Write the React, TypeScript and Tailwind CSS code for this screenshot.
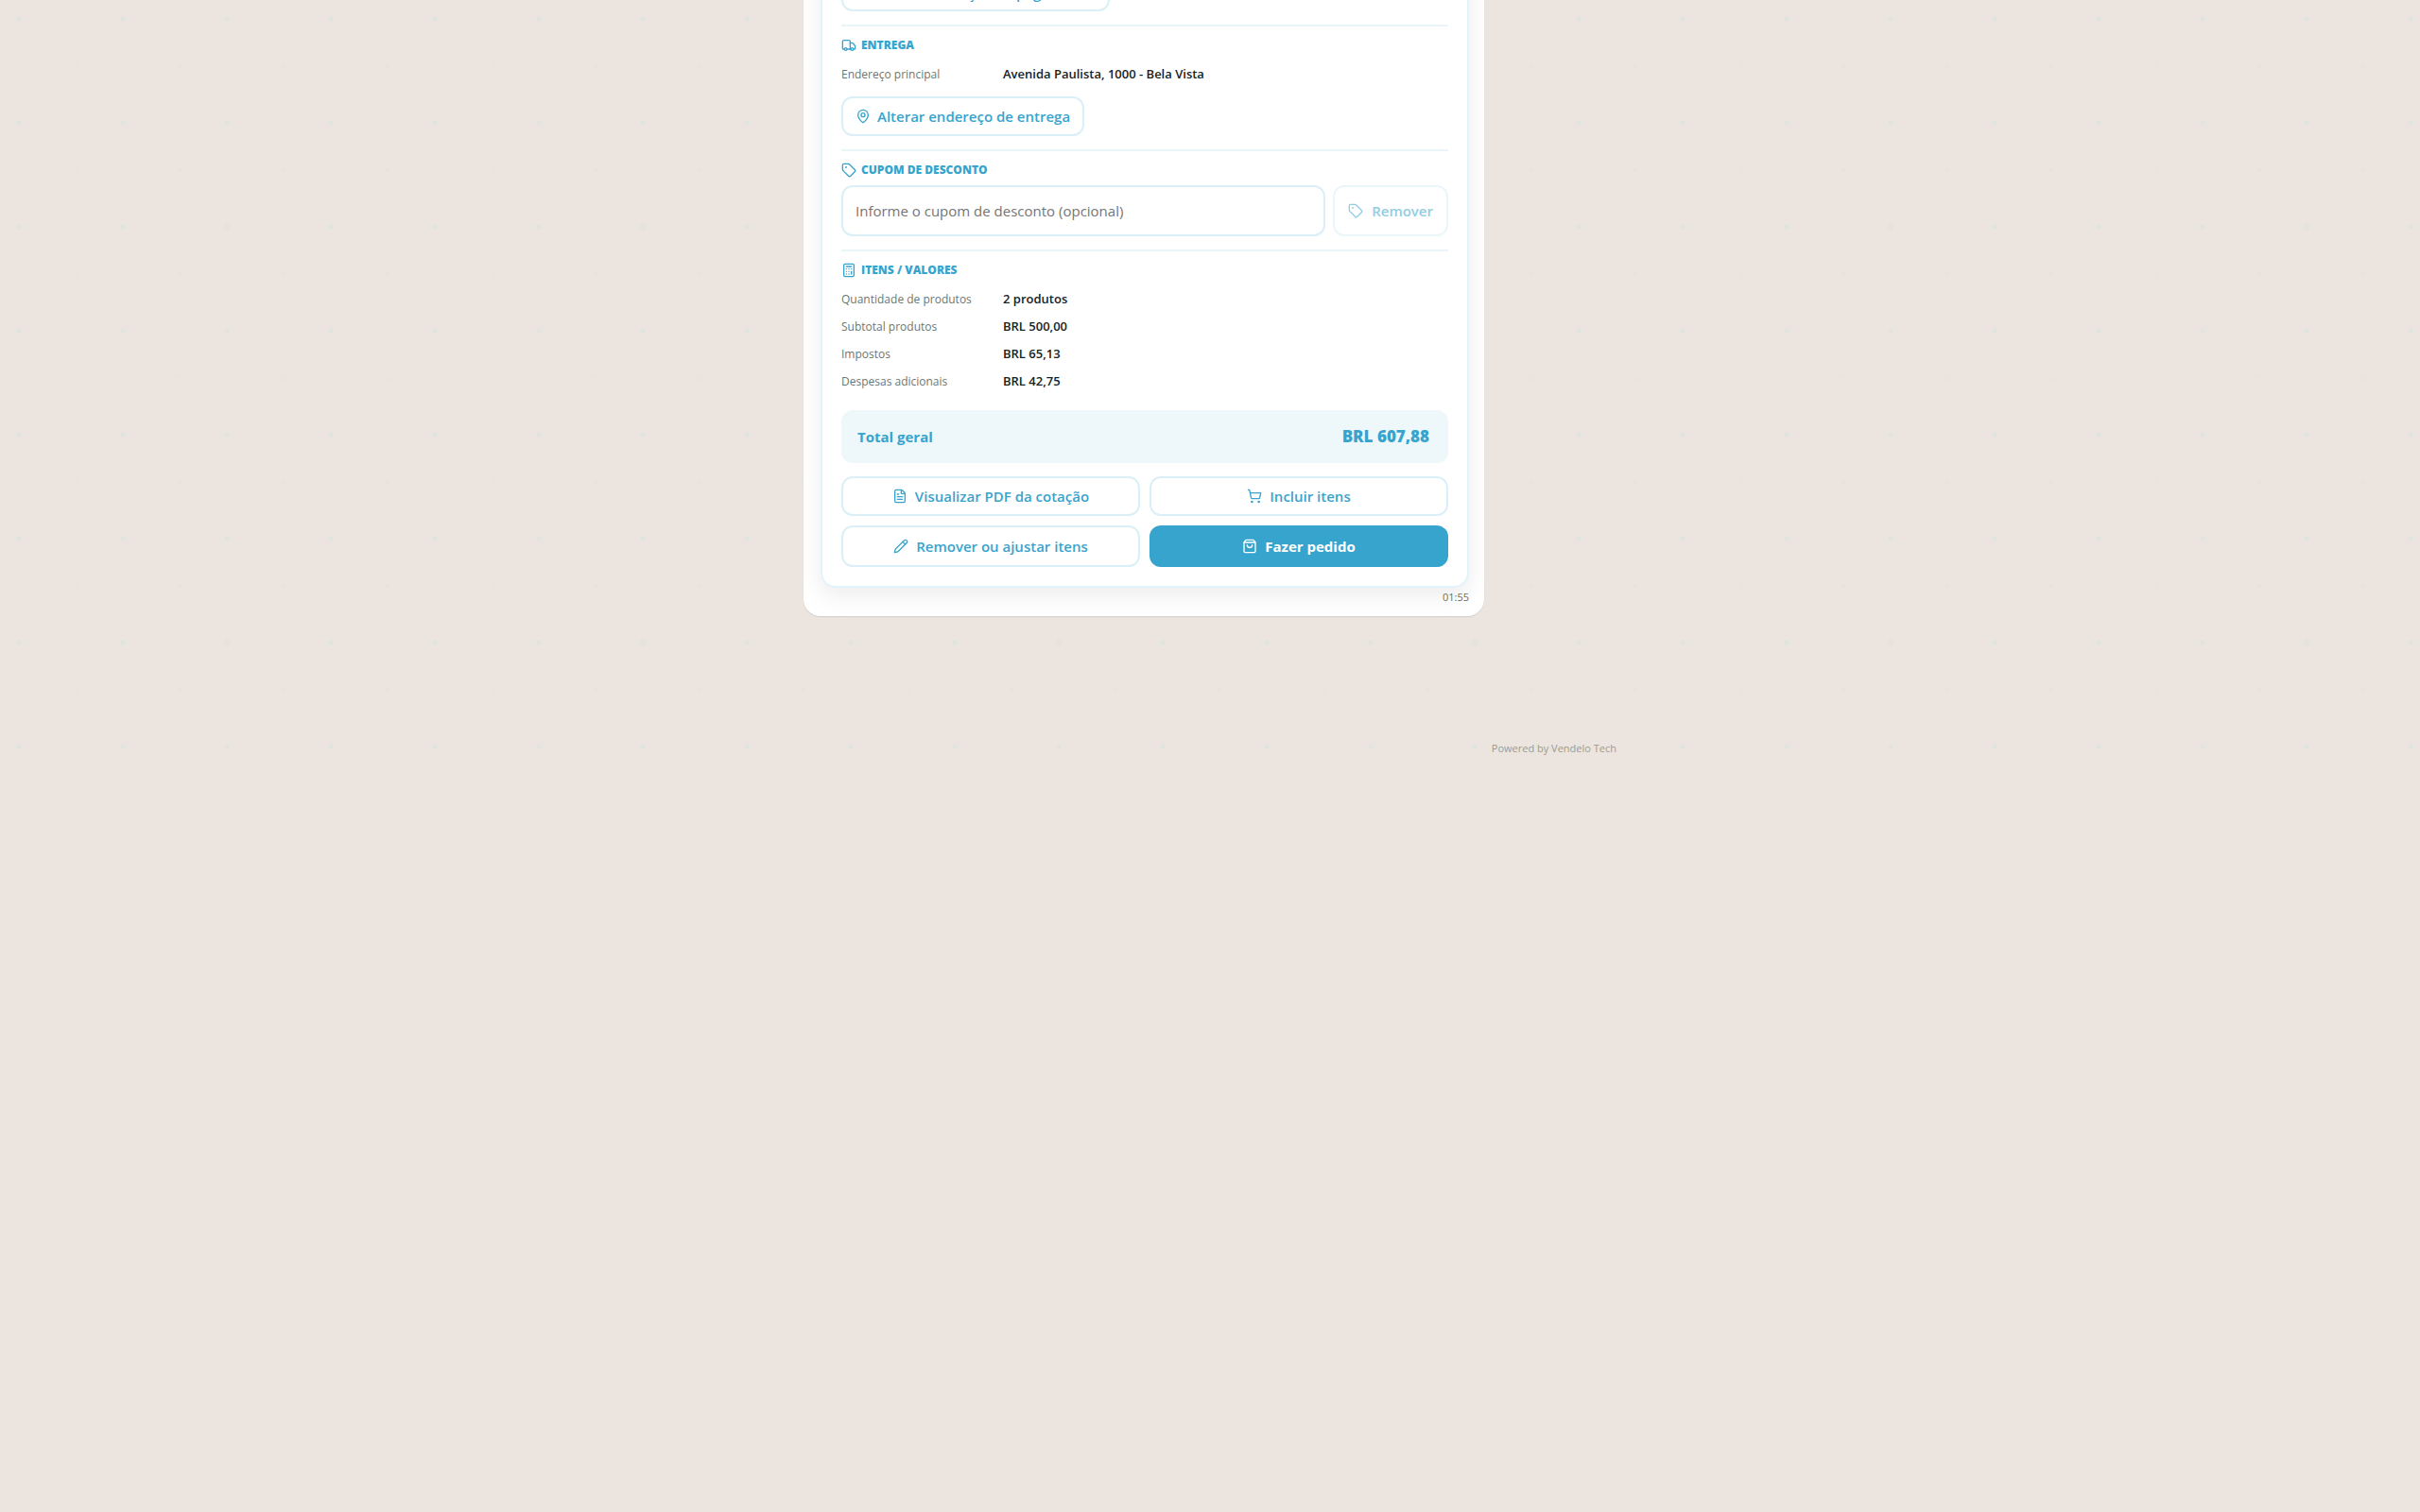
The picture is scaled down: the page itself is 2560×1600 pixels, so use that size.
import React from "react";
import { Calculator, CreditCard, FileText, MapPin, Pencil, ShoppingBag, ShoppingCart, Tag, Truck } from "lucide-react";

const values = [
  { label: "Quantidade de produtos", value: "2 produtos" },
  { label: "Subtotal produtos", value: "BRL 500,00" },
  { label: "Impostos", value: "BRL 65,13" },
  { label: "Despesas adicionais", value: "BRL 42,75" },
];

const outlineButton =
  "inline-flex items-center justify-center rounded-xl border-2 border-[#daeff7] bg-white text-[15px] leading-5 font-semibold text-[#37a4ce]";

const SectionTitle = ({ icon, children }: { icon: React.ReactNode; children: React.ReactNode }) => (
  <h3 className="flex items-center gap-[5px] text-xs leading-4 font-extrabold uppercase text-[#37a4ce]">
    {icon}
    {children}
  </h3>
);

const DetailList = ({ items }: { items: { label: string; value: string }[] }) => (
  <dl className="mt-3 flex flex-col gap-2">
    {items.map((item) => (
      <div key={item.label} className="grid grid-cols-[160px_1fr] items-center gap-[11px]">
        <dt className="text-xs leading-[21px] text-[#6b7772]">{item.label}</dt>
        <dd className="text-[13px] leading-[21px] font-semibold text-[#17211d]">{item.value}</dd>
      </div>
    ))}
  </dl>
);

const App = () => {
  return (
    <div className="min-h-screen bg-[#ece5df] font-['Open_Sans',sans-serif]">
      {/* Chat area */}
      <main className="overflow-hidden bg-[radial-gradient(circle_at_20px_20px,#dfe4dc_2px,transparent_3px),radial-gradient(circle_at_80px_70px,#e7e4de_2px,transparent_3px)] bg-[size:110px_110px] pb-5">
        <div className="mx-auto max-w-[860px]">
          {/* Message bubble, scrolled past its top */}
          <article className="-mt-[72px] max-w-[720px] overflow-hidden rounded-[18px] bg-white pt-5 pr-4 pb-3 pl-[18px] shadow-[0_1px_1px_rgba(0,0,0,0.1)]">
            <div className="rounded-2xl border-2 border-[#e3f3fa] bg-white p-5 shadow-[0_8px_24px_rgba(0,0,0,0.08)]">
              {/* Payment */}
              <section className="flex">
                <button type="button" className={`${outlineButton} h-[42px] gap-2 px-[14px] pt-1`}>
                  <CreditCard size={16} />
                  Alterar condição de pagamento
                </button>
              </section>

              {/* Delivery */}
              <section className="mt-[14px] border-t-2 border-[#e9f5f9] pt-3">
                <SectionTitle icon={<Truck size={16} />}>Entrega</SectionTitle>
                <DetailList items={[{ label: "Endereço principal", value: "Avenida Paulista, 1000 - Bela Vista" }]} />
                <button type="button" className={`${outlineButton} mt-[13px] h-[42px] gap-[7px] px-[13px]`}>
                  <MapPin size={16} />
                  Alterar endereço de entrega
                </button>
              </section>

              {/* Coupon */}
              <section className="mt-[14px] border-t-2 border-[#e9f5f9] pt-3">
                <SectionTitle icon={<Tag size={16} />}>Cupom de desconto</SectionTitle>
                <div className="mt-2 flex gap-2">
                  <input
                    type="text"
                    aria-label="Cupom de desconto"
                    placeholder="Informe o cupom de desconto (opcional)"
                    className="h-[54px] min-w-0 flex-1 rounded-xl border-2 border-[#daeff7] bg-white px-[13px] text-[15px] text-[#17211d] outline-none placeholder:text-[#757575]"
                  />
                  <button type="button" disabled className={`${outlineButton} gap-[9px] px-[14px] opacity-55`}>
                    <Tag size={16} />
                    Remover
                  </button>
                </div>
              </section>

              {/* Values */}
              <section className="mt-[14px] border-t-2 border-[#e9f5f9] pt-3">
                <SectionTitle icon={<Calculator size={16} />}>Itens / Valores</SectionTitle>
                <DetailList items={values} />
              </section>

              <div className="mt-5 flex h-14 items-center justify-between rounded-xl bg-[#eef8fb] pr-5 pl-[17px] text-[#37a4ce]">
                <span className="text-[15px] font-bold">Total geral</span>
                <span className="text-[17px] font-extrabold">BRL 607,88</span>
              </div>

              {/* Actions */}
              <div className="mt-[14px] grid grid-cols-2 gap-[10px]">
                <button type="button" className={`${outlineButton} h-[42px] gap-2`}>
                  <FileText size={16} />
                  Visualizar PDF da cotação
                </button>
                <button type="button" className={`${outlineButton} h-[42px] gap-2`}>
                  <ShoppingCart size={16} />
                  Incluir itens
                </button>
                <button type="button" className={`${outlineButton} h-11 gap-2`}>
                  <Pencil size={16} />
                  Remover ou ajustar itens
                </button>
                <button
                  type="button"
                  className="inline-flex h-11 items-center justify-center gap-2 rounded-xl bg-[#37a4ce] text-[15px] leading-5 font-bold text-white"
                >
                  <ShoppingBag size={16} />
                  Fazer pedido
                </button>
              </div>
            </div>
            <time className="mt-0.5 block text-right text-[11px] leading-4 text-[#66706b]">01:55</time>
          </article>

          <footer className="mt-[132px] text-right text-[11px] leading-4 text-[#9a9b93]">Powered by Vendelo Tech</footer>
        </div>
      </main>
    </div>
  );
};

export default App;
